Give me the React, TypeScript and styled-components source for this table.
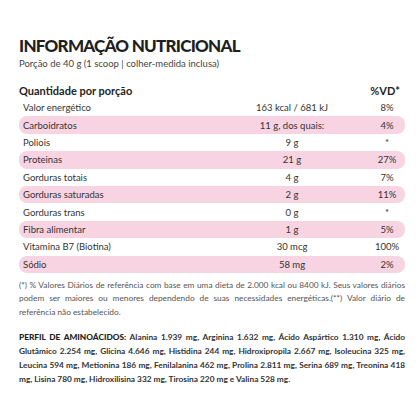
import styled, { createGlobalStyle } from 'styled-components';

interface INutrient {
  name: string;
  amount: string;
  vd: string;
}

const NUTRIENTS: INutrient[] = [
  { name: 'Valor energético', amount: '163 kcal / 681 kJ', vd: '8%' },
  { name: 'Carboidratos', amount: '11 g, dos quais:', vd: '4%' },
  { name: 'Poliois', amount: '9 g', vd: '*' },
  { name: 'Proteinas', amount: '21 g', vd: '27%' },
  { name: 'Gorduras totais', amount: '4 g', vd: '7%' },
  { name: 'Gorduras saturadas', amount: '2 g', vd: '11%' },
  { name: 'Gorduras trans', amount: '0 g', vd: '*' },
  { name: 'Fibra alimentar', amount: '1 g', vd: '5%' },
  { name: 'Vitamina B7 (Biotina)', amount: '30 mcg', vd: '100%' },
  { name: 'Sódio', amount: '58 mg', vd: '2%' },
];

const AMINO =
  'Alanina 1.939 mg, Arginina 1.632 mg, Ácido Aspártico 1.310 mg, Ácido Glutâmico 2.254 mg, Glicina 4.646 mg, Histidina 244 mg, Hidroxipropila 2.667 mg, Isoleucina 325 mg, Leucina 594 mg, Metionina 186 mg, Fenilalanina 462 mg, Prolina 2.811 mg, Serina 689 mg, Treonina 418 mg, Lisina 780 mg, Hidroxilisina 332 mg, Tirosina 220 mg e Valina 528 mg.';

function App() {
  return (
    <>
      <GlobalStyle />
      <Page>
        <Title>INFORMAÇÃO NUTRICIONAL</Title>
        <Portion>Porção de 40 g (1 scoop | colher-medida inclusa)</Portion>
        <Table>
          <HeadRow>
            <span>Quantidade por porção</span>
            <span>%VD*</span>
          </HeadRow>
          {NUTRIENTS.map((n, i) => (
            <Row key={n.name} $striped={i % 2 === 1}>
              <Name>{n.name}</Name>
              <Amount>{n.amount}</Amount>
              <Vd>{n.vd}</Vd>
            </Row>
          ))}
        </Table>
        <Footnote>
          (*) % Valores Diários de referência com base em uma dieta de 2.000
          kcal ou 8400 kJ. Seus valores diários podem ser maiores ou menores
          dependendo de suas necessidades energéticas.(**) Valor diário de
          referência não estabelecido.
        </Footnote>
        <Amino>
          <AminoLabel>PERFIL DE AMINOÁCIDOS:</AminoLabel>{' '}
          <span>{AMINO}</span>
        </Amino>
      </Page>
    </>
  );
}

const GlobalStyle = createGlobalStyle`
  body {
    margin: 0;
    background: #ffffff;
    font-family: Lato, 'Open Sans', sans-serif;
    color: #2b2b2b;
  }
`;

const Page = styled.div`
  width: 420px;
  height: 420px;
  box-sizing: border-box;
  padding: 36px 15px 0 19px;
  display: flex;
  flex-direction: column;
`;

const Title = styled.h1`
  margin: 0;
  font-size: 17px;
  font-weight: 900;
  line-height: 20px;
  letter-spacing: -0.75px;
  color: #1f1f1f;
`;

const Portion = styled.p`
  margin: 1px 0 0;
  font-size: 9.5px;
  line-height: 13px;
  color: #444;
`;

const Table = styled.div`
  margin-top: 13px;
  display: flex;
  flex-direction: column;
`;

const HeadRow = styled.div`
  display: flex;
  justify-content: space-between;
  padding-right: 5px;
  font-size: 11px;
  font-weight: 700;
  line-height: 16px;
  color: #1f1f1f;
`;

const Row = styled.div<{ $striped: boolean }>`
  display: grid;
  grid-template-columns: 1fr 120px 36px;
  column-gap: 17px;
  align-items: center;
  height: 17.4px;
  padding-left: 4px;
  border-radius: 8px;
  background: ${(p) => (p.$striped ? '#f8d4e2' : 'transparent')};
  font-size: 9.5px;
  color: #333;
`;

const Name = styled.span``;

const Amount = styled.span`
  text-align: center;
`;

const Vd = styled.span`
  text-align: center;
`;

const Footnote = styled.p`
  margin: 6px 0 0;
  font-size: 8.3px;
  line-height: 13.5px;
  text-align: justify;
  color: #555;
`;

const Amino = styled.p`
  margin: 11px 0 0;
  font-size: 8.3px;
  line-height: 14px;
  font-weight: 700;
  text-align: justify;
  color: #333;
`;

const AminoLabel = styled.span`
  font-weight: 900;
  color: #222;
`;

export default App;
